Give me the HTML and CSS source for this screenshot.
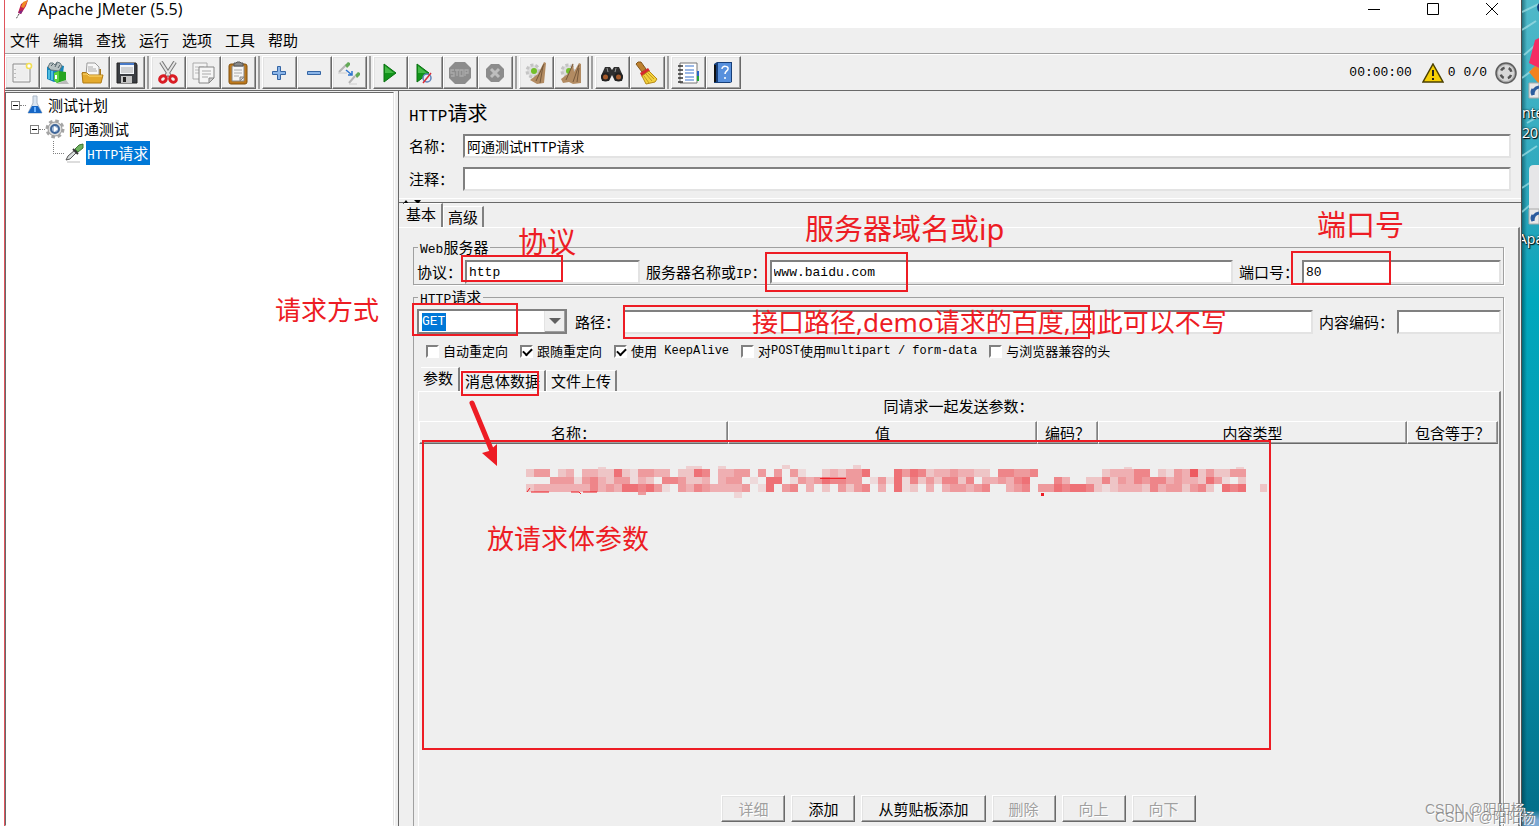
FILE: index.html
```html
<!DOCTYPE html>
<html lang="zh-CN">
<head>
<meta charset="utf-8">
<title>Apache JMeter (5.5)</title>
<link rel="stylesheet" href="styles.css">
</head>
<body>
<div class="screen">
  <main class="window">
    <header class="titlebar">
      <svg class="feather" width="14" height="20" viewBox="0 0 14 20"><path d="M12 0 5 4 2 13 5 14 10 6z" fill="#c4204e"/><path d="M12 0 7 2 5 7l3 1z" fill="#f08a24"/><path d="M2 12 5 14 7 10z" fill="#7c2a86"/><path d="M3 14 0 19" stroke="#444" stroke-dasharray="2 1"/></svg>
      <h1 class="title">Apache JMeter (5.5)</h1>
      <div class="window-buttons">
        <button class="win-btn" aria-label="最小化"><svg width="12" height="12" viewBox="0 0 12 12"><path d="M0 6.5h12" stroke="#000"/></svg></button>
        <button class="win-btn" aria-label="最大化"><svg width="12" height="12" viewBox="0 0 12 12"><path d="M.5.5h11v11H.5z" stroke="#000" fill="none"/></svg></button>
        <button class="win-btn" aria-label="关闭"><svg width="12" height="12" viewBox="0 0 12 12"><path d="m0 0 12 12M12 0 0 12" stroke="#000"/></svg></button>
      </div>
    </header>
    <nav class="menubar">
      <button>文件</button><button>编辑</button><button>查找</button><button>运行</button><button>选项</button><button>工具</button><button>帮助</button>
    </nav>
    <div class="toolbar">
      <div class="tool-group">
        <button class="tool" aria-label="新建"><svg viewBox="0 0 24 24"><path d="M3 3h17v18H3z" fill="#f4f4f4" stroke="#8c8c8c"/><path d="M5 5h13v14H5z" fill="#eee"/><path d="M5 8v10" stroke="#888" stroke-dasharray="1 3"/><circle cx="19" cy="5" r="2.5" fill="#fff" stroke="#f2df55" stroke-width="1.6"/></svg></button>
        <button class="tool" aria-label="模板"><svg viewBox="0 0 24 24"><path d="m2 6 8-3 9 2-2 14-8 2-7-3z" fill="#1684b8"/><path d="m3 6 2-4h3l2 2 2-3 3 1 2 3-3 5-8-1z" fill="#b7c1c2" stroke="#65777d"/><path d="m6 5 2-2m2 3 2-4m1 5 2-3" stroke="#536168"/><path d="M4 9v9m3-8v9" stroke="#62d0ee" stroke-width="1.5"/><path d="M11 23h13l-3-4z" fill="#bbb"/><path d="m9 12 5-2 7 1v8l-9 3-3-3z" fill="#26a522"/><path d="m9 12 5-2v10l-2 2-3-3z" fill="#5bd13d"/><path d="M11 14v4" stroke="#fff" stroke-width="2"/></svg></button>
        <button class="tool" aria-label="打开"><svg viewBox="0 0 24 24"><path d="M2 11h5V8h14v14H3z" fill="#a9771b"/><path d="M7 2h8l4 4v9H6z" fill="#f7f7f7" stroke="#9b9b9b"/><path d="M8 6h5m-5 2h8m-8 2h9" stroke="#aaa"/><path d="M2 12h5l2 2h14l-2 8H3z" fill="#e4aa2e" stroke="#b27c15"/><path d="M3 13h4l2 2h13" stroke="#ffdc77"/></svg></button>
        <button class="tool" aria-label="保存"><svg viewBox="0 0 24 24"><path d="M2 2h19l1 2v18H2z" fill="#3a3d42" stroke="#222"/><path d="M5 2h14v11H5z" fill="#f3f6fa"/><path d="M5 2h14v2H5z" fill="#4779c7"/><path d="M6 7h12M6 9h12M6 11h12" stroke="#aaa"/><path d="M6 15h11v7H6z" fill="#c4c4c4"/><path d="M8 16h3v5H8z" fill="#222"/></svg></button>
      </div>
      <div class="tool-group">
        <button class="tool" aria-label="剪切"><svg viewBox="0 0 24 24"><path d="m5 1 9 14M19 1l-9 14" stroke="#777" stroke-width="4"/><path d="m5 1 9 14M19 1l-9 14" stroke="#e4e4e4" stroke-width="2"/><ellipse cx="7" cy="18" rx="3.5" ry="3" transform="rotate(-35 7 18)" fill="none" stroke="#d91c24" stroke-width="3"/><ellipse cx="17" cy="18" rx="3.5" ry="3" transform="rotate(35 17 18)" fill="none" stroke="#d91c24" stroke-width="3"/></svg></button>
        <button class="tool" aria-label="复制"><svg viewBox="0 0 24 24"><path d="M2 2h14v16H2z" fill="#f4f4f4" stroke="#aaa"/><path d="M4 6h9M4 9h5M4 12h5" stroke="#bbb"/><path d="M8 6h15v11l-5 5H8z" fill="#f6f6f6" stroke="#858585"/><path d="M11 10h9m-9 3h9m-9 3h6" stroke="#aaa"/><path d="M18 22v-5h5z" fill="#ccc" stroke="#858585"/></svg></button>
        <button class="tool" aria-label="粘贴"><svg viewBox="0 0 24 24"><rect x="3" y="3" width="18" height="20" rx="2" fill="#bc781c" stroke="#81510f"/><path d="M6 5h12v15H6z" fill="#f5f5f5" stroke="#888"/><path d="M8 5V2h2l1-1h3l1 1h2v3z" fill="#888" stroke="#555"/><path d="M8 9h8m-8 3h8m-8 3h5" stroke="#aaa"/><path d="M14 20v-4h4z" fill="#ccc" stroke="#888"/></svg></button>
      </div>
      <div class="tool-group">
        <button class="tool" aria-label="展开"><svg viewBox="0 0 24 24"><path d="M10.500 5.500h3v5h5v3h-5v5h-3v-5h-5v-3h5z" fill="#8bb5e8" stroke="#3465a4"/></svg></button>
        <button class="tool" aria-label="折叠"><svg viewBox="0 0 24 24"><path d="M5.500 10.500h13v3h-13z" fill="#8bb5e8" stroke="#3465a4"/></svg></button>
        <button class="tool" aria-label="切换"><svg viewBox="0 0 24 24"><path d="m2 11 7-7M12 22l6-7" stroke="#b5b5b5" stroke-width="2"/><path d="m8 4 3-3 2 1v2l-3 3zM18 14l3-3 2 1v2l-3 3z" fill="#63a957"/><path d="m9 9 6 5m-4 0h4v-4" stroke="#2d74cf" stroke-width="1.5" fill="none"/><path d="M1 12h9M12 23h8" stroke="#ccc"/></svg></button>
      </div>
      <div class="tool-group">
        <button class="tool" aria-label="启动"><svg viewBox="0 0 24 24"><path d="m6 3 12 9-12 9z" fill="#12941a" stroke="#087011"/><path d="m7 5 9 7H7z" fill="#45ba47"/></svg></button>
        <button class="tool" aria-label="不停顿开始"><svg viewBox="0 0 24 24"><path d="m4 3 12 9-12 9z" fill="#12941a" stroke="#087011"/><path d="m5 5 9 7H5z" fill="#45ba47"/><circle cx="14" cy="17" r="4" fill="#e8edf5" stroke="#5e83ba" stroke-width="1.500"/><path d="m10 22 8-10" stroke="#d92c36" stroke-width="1.500"/></svg></button>
        <button class="tool" aria-label="停止" disabled><svg viewBox="0 0 24 24"><path d="M7 1h10l6 6v10l-6 6H7l-6-6V7z" fill="#8c8c8c"/><path d="M6 9H3v3h3v3H3m4-6h4M9 9v6m3-6h3v6h-3zm5 6V9h3v3h-3" fill="none" stroke="#aaa" stroke-width="1.300"/></svg></button>
        <button class="tool" aria-label="关闭" disabled><svg viewBox="0 0 24 24"><path d="M8 3h8l5 5v8l-5 5H8l-5-5V8z" fill="#8c8c8c"/><path d="m8 8 8 8m0-8-8 8" stroke="#bebebe" stroke-width="3"/></svg></button>
      </div>
      <div class="tool-group">
        <button class="tool" aria-label="清除"><svg viewBox="0 0 24 24"><circle cx="9" cy="10" r="6" fill="#ddd" stroke="#c4c4c4" stroke-width="3" stroke-dasharray="3 2"/><circle cx="10" cy="10" r="3" fill="#73bf2b"/><path d="m20 1 2 1-2 20-7 1-7-4 8-6z" fill="#b28b62"/><path d="m20 3-8 17m7-15-3 17" stroke="#785a3c"/></svg></button>
        <button class="tool" aria-label="清除全部"><svg viewBox="0 0 24 24"><circle cx="9" cy="10" r="6" fill="#ddd" stroke="#c4c4c4" stroke-width="3" stroke-dasharray="3 2"/><circle cx="10" cy="10" r="3" fill="#73bf2b"/><path d="m14 2 1 9 5-9 2 1v19l-8 1-4-2-6 1-2-4 8-6z" fill="#b28b62"/><path d="m14 3-7 16m13-15-6 17m6-14-2 14" stroke="#785a3c"/></svg></button>
      </div>
      <div class="tool-group">
        <button class="tool" aria-label="查找"><svg viewBox="0 0 24 24"><path d="M5 6h5l2 3 2-3h5l4 9-1 5h-7l-3-6-3 6H2l-1-5z" fill="#303030"/><circle cx="5.500" cy="16" r="4.500" fill="#222"/><circle cx="18.500" cy="16" r="4.500" fill="#222"/><circle cx="5.500" cy="16" r="2.500" fill="#a55a2a"/><circle cx="18.500" cy="16" r="2.500" fill="#a55a2a"/><path d="m7 7 1 4m8-4-1 4" stroke="#999"/></svg></button>
        <button class="tool" aria-label="重置查找"><svg viewBox="0 0 24 24"><path d="m1 3 2-2h3l5 7-4 3z" fill="#bd8130" stroke="#845619"/><path d="m5 12 8-5 2 3-8 6z" fill="#d6282c"/><path d="m7 15 7-5 8 8-2 3-9 2z" fill="#f3d13d" stroke="#b68a16"/><path d="m9 15 5 7m-3-9 6 7m-4-8 6 6" stroke="#c29a20"/></svg></button>
      </div>
      <div class="tool-group">
        <button class="tool" aria-label="函数助手"><svg viewBox="0 0 24 24"><path d="M4 2h17v20H4z" fill="#fff" stroke="#777"/><path d="M2 5h5M2 9h5m-5 4h5m-5 4h5m-5 4h5" stroke="#333" stroke-width="1.500"/><path d="M9 5h9M9 9h9m-9 3h9m-9 4h9m-9 3h9" stroke="#3872ce" stroke-width="1.200"/><path d="M22 10v5" stroke="#2865c8" stroke-width="2"/><path d="M22 15v5" stroke="#20a635" stroke-width="2"/></svg></button>
        <button class="tool" aria-label="帮助"><svg viewBox="0 0 24 24"><path d="m3 3 3-2h15v20l-2 1H3z" fill="#173f79"/><path d="M7 2h13v19H7z" fill="#5790dd"/><path d="M4 4v17" stroke="#111" stroke-width="2"/><path d="M11 8c0-4 7-3 6 0 0 2-3 2-3 5m0 3v2" fill="none" stroke="#fff" stroke-width="1.500"/></svg></button>
      </div>
      <div class="status">
        <span class="clock">00:00:00</span>
        <svg width="22" height="20" viewBox="0 0 22 20"><path d="M11 1 21 19H1z" fill="#f5cf05" stroke="#4b4000" stroke-width="1.500"/><path d="M11 7v6m0 2v2" stroke="#222" stroke-width="2"/></svg>
        <span>0</span>
        <span class="threads">0/0</span>
        <svg width="22" height="22" viewBox="0 0 22 22"><circle cx="11" cy="11" r="10" fill="#aaa" stroke="#5c5c5c" stroke-width="1.500"/><circle cx="11" cy="11" r="8" fill="#d9d9d9"/><circle cx="11" cy="11" r="5.500" fill="none" stroke="#555" stroke-width="2.500" stroke-dasharray="4.320 4.320" stroke-dashoffset="-2.160"/></svg>
      </div>
    </div>

    <div class="workspace">
      <aside class="tree-panel">
        <ul class="tree">
          <li class="node">
            <button class="expander" aria-label="折叠"></button><i class="branch"></i>
            <svg width="16" height="20" viewBox="0 0 16 20"><path d="M6 1h4v7l5 10H1L6 8z" fill="#dce6f1" stroke="#aab7c6"/><path d="m5 11 6 0 4 7H1z" fill="#1766c4"/><path d="M8 12v5" stroke="#6ab2ff" stroke-width="2"/></svg>
            <span class="node-text">测试计划</span>
          </li>
          <li class="node level-2">
            <button class="expander" aria-label="折叠"></button><i class="branch"></i>
            <svg width="20" height="20" viewBox="0 0 20 20"><circle cx="10" cy="10" r="8" fill="none" stroke="#a5a5a5" stroke-width="3" stroke-dasharray="3.500 2.783"/><circle cx="10" cy="10" r="7" fill="#ddd" stroke="#999"/><circle cx="10" cy="10" r="4" fill="#a7bedb" stroke="#3f6699" stroke-width="2"/><path d="m9 7 4 3-4 3z" fill="#fff"/></svg>
            <span class="node-text">阿通测试</span>
          </li>
          <li class="node level-3">
            <i class="elbow"></i>
            <svg width="20" height="20" viewBox="0 0 20 20"><path d="m2 17 2-4 7-6 2 2-7 7z" fill="#d8dddd" stroke="#555"/><path d="m9 6 5 5" stroke="#333" stroke-width="2"/><path d="m11 6 4-4 4-1v4l-5 4z" fill="#6fb25f" stroke="#3f7535"/><path d="M3 19h13" stroke="#bbb"/></svg>
            <span class="node-text selected"><span class="latin">HTTP</span>请求</span>
          </li>
        </ul>
      </aside>

      <section class="editor">
        <div class="element-head">
          <h2 class="element-title"><span class="latin-title">HTTP</span>请求</h2>
          <div class="field-row"><label class="head-label" for="name">名称：</label><input class="field grow mixed" id="name" value="阿通测试HTTP请求"></div>
          <div class="field-row"><label class="head-label" for="comment">注释：</label><input class="field grow" id="comment"></div>
        </div>
        <div class="splitter"><svg width="22" height="5" viewBox="0 0 22 5"><path d="m1 5 3-4 3 4zM12 1h7l-3 4z"/></svg></div>

        <div class="tabs">
          <button class="tab active">基本</button><button class="tab">高级</button>
        </div>
        <div class="tab-body">
          <fieldset class="group">
            <legend><span class="latin">Web</span>服务器</legend>
            <div class="server-row">
              <label for="protocol">协议：</label><input class="field protocol" id="protocol" value="http">
              <label for="host">服务器名称或<span class="latin">IP</span>：</label><input class="field host" id="host" value="www.baidu.com">
              <label for="port">端口号：</label><input class="field port" id="port" value="80">
            </div>
          </fieldset>

          <fieldset class="group request">
            <legend><span class="latin">HTTP</span>请求</legend>
            <div class="server-row">
              <div class="combo"><select aria-label="请求方法"><option>GET</option><option>POST</option><option>PUT</option></select><span class="combo-arrow"></span></div>
              <label for="path">路径：</label><input class="field grow" id="path">
              <label for="encoding">内容编码：</label><input class="field encoding" id="encoding">
            </div>
            <div class="checks">
              <label><input type="checkbox">自动重定向</label>
              <label><input type="checkbox" checked>跟随重定向</label>
              <label><input type="checkbox" checked>使用<span class="latin-small">&nbsp;KeepAlive</span></label>
              <label><input type="checkbox">对<span class="latin-small">POST</span>使用<span class="latin-small">multipart / form-data</span></label>
              <label><input type="checkbox">与浏览器兼容的头</label>
            </div>
            <div class="tabs inner">
              <button class="tab active">参数</button><button class="tab">消息体数据</button><button class="tab">文件上传</button>
            </div>
            <div class="params">
              <table class="params-table">
                <caption>同请求一起发送参数：</caption>
                <colgroup><col><col><col class="col-encode"><col><col class="col-equals"></colgroup>
                <thead><tr><th>名称：</th><th>值</th><th>编码？</th><th>内容类型</th><th>包含等于？</th></tr></thead>
              </table>
              <div class="actions">
                <button disabled>详细</button><button>添加</button><button>从剪贴板添加</button><button disabled>删除</button><button disabled>向上</button><button disabled>向下</button>
              </div>
            </div>
          </fieldset>
        </div>
      </section>
    </div>
  </main>

  <aside class="desktop">
    <svg width="17" height="240" viewBox="0 0 17 240">
      <path d="m0 12 17-8M0 30l14-9M2 55l15-13M0 78l12-9m-7 54 12-7M0 156l15-10M0 188l9-6M0 212l8-7" stroke="#a5e0e6" stroke-width="2" opacity=".7"/>
      <path d="M17 3q-4 4 0 9" fill="#123b7a"/>
      <path d="m13 40 4-2v30L7 63z" fill="#f52c63"/><path d="m7 72 6-6 4 2v16z" fill="#f28220"/>
      <path d="M7 83h10v15H7z" fill="#e8e8e8" stroke="#aaa"/><path d="M11 95q0-7 6-8m-6 8q-2-3 0-6" fill="none" stroke="#2b5c9e" stroke-width="3"/>
      <path d="M17 165h-5q-5 0-5 5v39h10z" fill="#e6e6e8"/>
      <path d="M7 209h10v15H7z" fill="#e8e8e8" stroke="#aaa"/><path d="M11 221q0-7 6-8m-6 8q-2-3 0-6" fill="none" stroke="#2b5c9e" stroke-width="3"/>
    </svg>
    <span class="desk-label first">nte</span>
    <span class="desk-label second">20</span>
    <span class="desk-label third">Apa</span>
  </aside>

  <div class="notes">
    <i class="box" style="left:461px;top:255px;width:102px;height:27px"></i>
    <i class="box" style="left:765px;top:252px;width:143px;height:40px"></i>
    <i class="box" style="left:1291px;top:251px;width:100px;height:34px"></i>
    <i class="box" style="left:412px;top:303px;width:106px;height:33px"></i>
    <i class="box" style="left:623px;top:305px;width:467px;height:34px"></i>
    <i class="box" style="left:461px;top:371px;width:78px;height:25px"></i>
    <i class="box" style="left:422px;top:440px;width:849px;height:310px"></i>
    <span class="note large" style="left:518px;top:227px">协议</span>
    <span class="note large" style="left:805px;top:214px">服务器域名或ip</span>
    <span class="note large" style="left:1317px;top:210px">端口号</span>
    <span class="note" style="left:275px;top:296px">请求方式</span>
    <span class="note" style="left:752px;top:308px">接口路径,demo请求的百度,因此可以不写</span>
    <span class="note medium" style="left:487px;top:524px">放请求体参数</span>
    <svg class="arrow" width="32" height="68" viewBox="0 0 32 68"><path d="m5 4 19 46" stroke="#ed1c24" stroke-width="5" stroke-linecap="round"/><path d="m15 54 7-2 8-7 0 22z" fill="#ed1c24"/></svg>
    <svg class="mosaic" id="mosaic" width="745" height="34" viewBox="0 0 745 34"></svg>
    <span class="watermark" style="left:1425px;top:799px">CSDN @阳阳杨</span>
    <span class="watermark" style="left:1435px;top:807px">CSDN @阳阳杨</span>
  </div>
</div>
<script src="mosaic.js"></script>
</body>
</html>
```
FILE: styles.css
```css
* { box-sizing: border-box; }

body {
  margin: 0;
  overflow: hidden;
  background: #fff;
  color: #000;
  font: 15px/20px "Noto Sans CJK SC", sans-serif;
}

button, input, select, fieldset, h1, h2, ul {
  margin: 0;
  padding: 0;
  font: inherit;
  color: inherit;
}

.screen {
  display: flex;
  height: 100vh;
  padding-left: 4px;
}

.window {
  flex: 1;
  min-width: 0;
  display: flex;
  flex-direction: column;
  background: #efefef;
  border-left: 1px solid #e0545c;
  border-right: 1px solid #505050;
}

.latin, .latin-small, .latin-title {
  font-family: "Liberation Mono", monospace;
  line-height: 1;
}
.latin { font-size: 13px; }
.latin-small { font-size: 12px; }
.latin-title { font-size: 16px; }

/* Title bar and menu */
.titlebar {
  display: flex;
  flex: none;
  height: 28px;
  padding-left: 11px;
  background: #fff;
}
.title {
  flex: 1;
  padding-left: 8px;
  font: 16px/18px "Open Sans", sans-serif;
}
.window-buttons { display: flex; height: 18px; }
.win-btn {
  display: flex;
  align-items: center;
  justify-content: center;
  width: 59px;
  border: 0;
  background: none;
}
.menubar {
  display: flex;
  flex: none;
  gap: 13px;
  height: 26px;
  padding: 0 0 2px 5px;
  border-bottom: 1px solid #a0a0a0;
}
.menubar button { border: 0; background: none; }

/* Toolbar */
.toolbar {
  display: flex;
  flex: none;
  align-items: flex-start;
  height: 36px;
  padding-top: 1px;
  border-top: 1px solid #fff;
}
.tool-group { display: flex; }
.tool-group + .tool-group {
  margin-left: 2px;
  padding-left: 2px;
  border-left: 2px solid #a0a0a0;
}
.tool {
  display: flex;
  align-items: center;
  justify-content: center;
  width: 35px;
  height: 33px;
  border: 1px solid;
  border-color: #fff #696969 #696969 #fff;
  background: #efefef;
  box-shadow: inset -1px -1px #a0a0a0, inset 1px 1px #e3e3e3;
}
.tool svg { width: 24px; height: 24px; margin-right: 2px; fill: none; }
.status {
  display: flex;
  align-items: center;
  height: 33px;
  margin-left: auto;
  padding-right: 4px;
  font: 13px/20px "Liberation Mono", monospace;
  gap: 8px;
}
.clock { padding-right: 2px; }
.status svg + span { margin-left: -4px; }

/* Work area */
.workspace {
  flex: 1;
  min-height: 0;
  display: grid;
  grid-template-columns: 389px 1fr;
  gap: 4px;
  border-top: 1px solid #696969;
}
.tree-panel {
  margin-top: 1px;
  background: #fff;
  border: 1px solid;
  border-color: #696969 #e3e3e3 #fff #696969;
  box-shadow: 1px 0 #fff;
}
.tree { list-style: none; }
.node {
  display: flex;
  align-items: center;
  height: 24px;
  padding-left: 5px;
}
.level-2 { padding-left: 24px; }
.level-3 { padding-left: 47px; }
.expander {
  width: 9px;
  height: 9px;
  border: 1px solid #808080;
  background: linear-gradient(#000, #000) center / 5px 1px no-repeat #fff;
}
.branch { width: 6px; border-top: 1px dotted #808080; margin-right: 1px; }
.level-2 .branch { margin-right: 0; }
.elbow {
  width: 11px;
  height: 13px;
  margin-bottom: 12px;
  border: 1px dotted #808080;
  border-width: 0 0 1px 1px;
}
.node svg { flex: none; }
.node-text { margin-left: 5px; }
.level-2 .node-text { margin-left: 4px; }
.node-text.selected {
  margin-left: 2px;
  padding: 2px 2px 2px 1px;
  background: #0078d7;
  color: #fff;
}

.editor {
  display: flex;
  flex-direction: column;
  min-width: 0;
  border-left: 1px solid #696969;
}
.element-head {
  display: flex;
  flex-direction: column;
  gap: 9px;
  padding: 10px 10px 7px;
}
.element-title {
  height: 24px;
  font-size: 20px;
  line-height: 24px;
  font-weight: 400;
}
.field-row { display: flex; align-items: center; }
.head-label { width: 54px; }
.field {
  height: 24px;
  min-width: 0;
  padding: 0 2px;
  border: 2px solid;
  border-color: #808080 #e3e3e3 #e3e3e3 #808080;
  border-radius: 0;
  background: #fff;
  font: 13px/20px "Liberation Mono", "Noto Sans CJK SC", monospace;
  outline: 0;
}
.field.mixed { font-size: 14px; }
.grow { flex: 1; }
.splitter {
  display: flex;
  height: 5px;
  padding-left: 3px;
  border-top: 1px solid #fff;
  border-bottom: 1px solid #696969;
}

.tabs { display: flex; align-items: flex-end; height: 24px; padding-left: 5px; }
.tab {
  height: 21px;
  padding: 0 4px;
  border: 0;
  border-top: 1px solid #fff;
  border-left: 1px solid #fff;
  border-right: 2px solid #808080;
  background: #efefef;
}
.tab.active { height: 24px; padding: 0 5px 3px 2px; border-left: 0; }
.tab-body {
  flex: 1;
  min-height: 0;
  display: flex;
  flex-direction: column;
  gap: 2px;
  margin-right: 1px;
  padding: 9px 14px 0 14px;
  border-top: 1px solid #fff;
  border-right: 2px solid #808080;
}

/* Titled groups */
.group {
  min-width: 0;
  padding: 3px 2px 0 3px;
  border: 1px solid #a0a0a0;
  box-shadow: 1px 1px #fff;
}
.group legend { height: 20px; margin-left: 1px; padding: 0 2px; }
.server-row { display: flex; align-items: center; }
.server-row label { flex: none; margin-right: 3px; }
.server-row input + label { margin-left: 6px; }
.protocol { flex: 166 1 0; }
.host { flex: 453 1 0; }
.port { flex: 190 1 0; }
.encoding { width: 104px; }
.request {
  flex: 1;
  display: flex;
  flex-direction: column;
  padding-top: 2px;
  border-bottom: 0;
}
.combo {
  position: relative;
  width: 150px;
  margin-right: 8px;
}
.combo select {
  display: block;
  width: 100%;
  height: 25px;
  padding-left: 3px;
  border: 2px solid #808080;
  border-radius: 0;
  appearance: none;
  background: linear-gradient(#0078d7, #0078d7) 3px 2px / 24px 18px no-repeat #fff;
  color: #fff;
  font: 13px/20px "Liberation Mono", monospace;
}
.combo select option { color: #000; }
.combo-arrow {
  position: absolute;
  top: 2px;
  right: 2px;
  width: 21px;
  height: 21px;
  border-left: 1px solid #e3e3e3;
  background: #efefef;
  box-shadow: inset -1px -1px #a0a0a0;
  pointer-events: none;
}
.combo-arrow::after {
  content: "";
  position: absolute;
  left: 4px;
  top: 7px;
  border: 6px solid transparent;
  border-top-color: #606060;
  border-bottom: 0;
}
.checks {
  display: flex;
  gap: 12px;
  padding: 7px 0 6px 9px;
  font-size: 13px;
  white-space: nowrap;
}
.checks label { display: flex; align-items: center; height: 20px; }
.checks input {
  appearance: none;
  width: 13px;
  height: 13px;
  margin-right: 4px;
  border: 2px solid;
  border-color: #808080 #fff #fff #808080;
  background: #fff;
}
.checks input:checked::after {
  content: "";
  display: block;
  width: 7px;
  height: 4px;
  margin: 1px;
  border: solid #000;
  border-width: 0 0 2px 2px;
  transform: rotate(-45deg);
}
.inner { padding-left: 4px; }
.params {
  flex: 1;
  display: flex;
  flex-direction: column;
  justify-content: space-between;
  margin-left: 1px;
  padding-right: 1px;
  border-top: 1px solid #fff;
  border-left: 1px solid #fff;
  border-right: 2px solid #808080;
}
.params-table {
  width: 100%;
  table-layout: fixed;
  border-collapse: separate;
  border-spacing: 0;
}
.params-table caption { height: 29px; line-height: 28px; }
.params-table th {
  height: 23px;
  padding: 0;
  line-height: 20px;
  border: 1px solid;
  border-color: #fff #808080 #696969 #fff;
  box-shadow: inset -1px -1px #a0a0a0;
  font-weight: 400;
}
.col-encode { width: 61px; }
.col-equals { width: 91px; }
.actions {
  display: flex;
  justify-content: center;
  gap: 6px;
  padding-bottom: 4px;
}
.actions button {
  height: 27px;
  padding: 0 16px;
  border: 1px solid;
  border-color: #fff #696969 #696969 #fff;
  background: #efefef;
  box-shadow: inset -1px -1px #a0a0a0, inset 1px 1px #e3e3e3;
}
.actions button:disabled { color: #a0a0a0; text-shadow: 1px 1px #fff; }

/* Strip of desktop beside the window */
.desktop {
  position: relative;
  width: 17px;
  overflow: hidden;
  background: linear-gradient(90deg, rgba(0, 50, 60, .5), transparent 5px), linear-gradient(#4fb9c9 0, #27a5bb 220px, #00a8bd 300px, #0794ad 580px, #03708a 810px, #7ba9d4 820px);
}
.desktop svg { display: block; }
.desk-label {
  position: absolute;
  left: 0;
  color: #fff;
  font: 14px/18px "Open Sans", sans-serif;
  text-shadow: 1px 1px 1px #000, 0 0 2px #000;
}
.first { top: 104px; }
.second { top: 124px; }
.third { top: 230px; left: -4px; }

/* Red annotations lying over the window */
.notes { position: absolute; inset: 0; overflow: hidden; pointer-events: none; }
.box { position: absolute; border: 2px solid #ed1c24; }
.note {
  position: absolute;
  color: #ed1c24;
  font: 26px/29px "Noto Sans", "Noto Sans CJK SC", sans-serif;
  white-space: nowrap;
}
.note.large { font-size: 29px; }
.note.medium { font-size: 27px; }
.arrow { position: absolute; left: 467px; top: 399px; }
.mosaic { position: absolute; left: 526px; top: 465px; }
.watermark {
  position: absolute;
  color: rgba(120, 120, 120, .75);
  font: 14px/20px "Liberation Sans", "Noto Sans CJK SC", sans-serif;
  text-shadow: 1px 1px #fff;
  white-space: nowrap;
}
```
FILE: mosaic.js
```javascript
// Each digit is the strength of one tile in the censored line of text.
const rows = [
  { y: 4, h: 8, tiles: "244023033226214433022650334404040410023244600064652334332205544500000000233355021437242244" },
  { y: 12, h: 7, tiles: "000444145324413205542230344010660143465544014161524255250334356000530022524354553433264102" },
  { y: 19, h: 8, tiles: "233333335343665641043543333401604503020424503061203034434500345044656652123332534424520656" }
];
const parts = [];
const tile = (x, y, w, h, alpha) =>
  parts.push(`<rect x="${x}" y="${y}" width="${w}" height="${h}" fill="#ed1c24" fill-opacity="${alpha}"/>`);
rows.forEach(({ y, h, tiles }) => {
  [...tiles].forEach((d, i) => {
    if (d !== "0") tile(i * 8, y, 8, h, d / 10);
  });
});
[[72, 2, 8, 2], [160, 1, 16, 3], [192, 1, 8, 3], [256, 0, 8, 4], [327, 0, 8, 4], [598, 2, 8, 2], [710, 2, 8, 2]]
  .forEach(([x, y, w, h]) => tile(x, y, w, h, 0.15));
tile(112, 27, 8, 3, 0.4);
tile(208, 27, 8, 6, 0.12);
tile(294, 13, 26, 1, 0.9);
tile(515, 28, 3, 3, 1);
tile(734, 19, 7, 8, 0.2);
parts.push('<path d="M1 27 4 23M5 27h18m22 0h8l2 2m2-2h14" stroke="#ed1c24" fill="none"/>');
document.getElementById("mosaic").innerHTML = parts.join("");
```
